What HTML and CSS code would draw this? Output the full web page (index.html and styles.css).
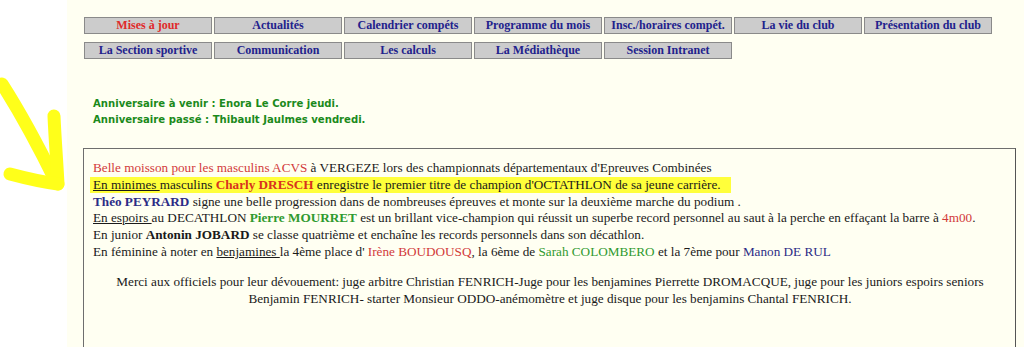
FILE: index.html
```html
<!DOCTYPE html>
<html lang="fr">
<head>
<meta charset="utf-8">
<title>ACVS</title>
<link rel="stylesheet" href="styles.css">
</head>
<body>
<div class="page">
  <aside class="gutter">
    <svg class="arrow" width="70" height="200" viewBox="0 0 70 200" aria-hidden="true">
      <g fill="none" stroke="#ffff1a" stroke-width="13" stroke-linecap="round" stroke-linejoin="round">
        <path d="M2 10 C 18 35, 35 65, 56 108"/>
        <path d="M54 42 C 55 65, 57 90, 58 110"/>
        <path d="M10 100 C 25 104, 42 108, 58 110"/>
      </g>
    </svg>
  </aside>
  <main class="main">
    <nav class="menu">
      <a class="btn current">Mises à jour</a>
      <a class="btn">Actualités</a>
      <a class="btn">Calendrier compéts</a>
      <a class="btn">Programme du mois</a>
      <a class="btn">Insc./horaires compét.</a>
      <a class="btn">La vie du club</a>
      <a class="btn">Présentation du club</a>
      <a class="btn">La Section sportive</a>
      <a class="btn">Communication</a>
      <a class="btn">Les calculs</a>
      <a class="btn">La Médiathèque</a>
      <a class="btn">Session Intranet</a>
    </nav>
    <div class="birthdays">
      <div>Anniversaire à venir : Enora Le Corre jeudi.</div>
      <div>Anniversaire passé : Thibault Jaulmes vendredi.</div>
    </div>
    <section class="news">
      <div class="lines">
        <div><span class="red">Belle moisson pour les masculins ACVS</span> à VERGEZE lors des championnats départementaux d'Epreuves Combinées</div>
        <div><span class="hl"><u>En minimes </u>masculins <b class="orange">Charly DRESCH</b> enregistre le premier titre de champion d'OCTATHLON de sa jeune carrière.</span></div>
        <div><b class="navy">Théo PEYRARD</b> signe une belle progression dans de nombreuses épreuves et monte sur la deuxième marche du podium .</div>
        <div><u>En espoirs </u>au DECATHLON <b class="green">Pierre MOURRET</b> est un brillant vice-champion qui réussit un superbe record personnel au saut à la perche en effaçant la barre à <span class="red">4m00</span>.</div>
        <div>En junior <b>Antonin JOBARD</b> se classe quatrième et enchaîne les records personnels dans son décathlon.</div>
        <div>En féminine à noter en <u>benjamines </u>la 4ème place d' <span class="red">Irène BOUDOUSQ</span>, la 6ème de <span class="green">Sarah COLOMBERO</span> et la 7ème pour <span class="navy">Manon DE RUL</span></div>
      </div>
      <p class="thanks">Merci aux officiels pour leur dévouement: juge arbitre Christian FENRICH-Juge pour les benjamines Pierrette DROMACQUE, juge pour les juniors espoirs seniors<br>Benjamin FENRICH- starter Monsieur ODDO-anémomètre et juge disque pour les benjamins Chantal FENRICH.</p>
    </section>
  </main>
</div>
</body>
</html>
```

FILE: styles.css
```css
html, body {
  margin: 0;
  padding: 0;
  background: #ffffff;
  height: 100%;
  overflow: hidden;
}

.page {
  display: flex;
  min-height: 347px;
}

.gutter {
  position: relative;
  width: 67px;
  flex: 0 0 67px;
  background: #ffffff;
}

.arrow {
  position: absolute;
  left: 0;
  top: 74px;
}

.main {
  flex: 1;
  background: #fffff2;
  padding: 17px 0 0 16px;
  font-family: "Liberation Serif", "Times New Roman", serif;
}

.menu {
  display: grid;
  grid-template-columns: repeat(7, 128px);
  grid-auto-rows: 17px;
  column-gap: 2px;
  row-gap: 8px;
  margin-left: 1px;
}

.btn {
  box-sizing: border-box;
  display: flex;
  align-items: center;
  justify-content: center;
  background: #cccccc;
  border: 1px solid #8a8a8a;
  font-weight: bold;
  font-size: 12px;
  color: #22228c;
  white-space: nowrap;
}

.btn.current {
  color: #e02a2a;
}

.birthdays {
  margin: 37px 0 0 10px;
  font-family: "DejaVu Sans", Verdana, sans-serif;
  font-weight: bold;
  font-size: 10.1px;
  line-height: 16px;
  color: #1b8a1b;
}

.news {
  margin-top: 20px;
  width: 914px;
  min-height: 220px;
  border: 1px solid #6e6e6e;
  border-right-color: #555;
  padding: 11px 8px 0 9px;
  font-size: 13.2px;
  line-height: 16.8px;
  color: #1a1a1a;
}

.lines div {
  white-space: nowrap;
}

.red { color: #d23a3a; }
.orange { color: #d8321e; }
.navy { color: #2c2c86; }
.green { color: #2f9a2f; }

.hl {
  background: #ffff3a;
  padding: 0 10px 1px 3px;
  margin-left: -3px;
}

.thanks {
  margin: 13px 0 0;
  text-align: center;
}
```
